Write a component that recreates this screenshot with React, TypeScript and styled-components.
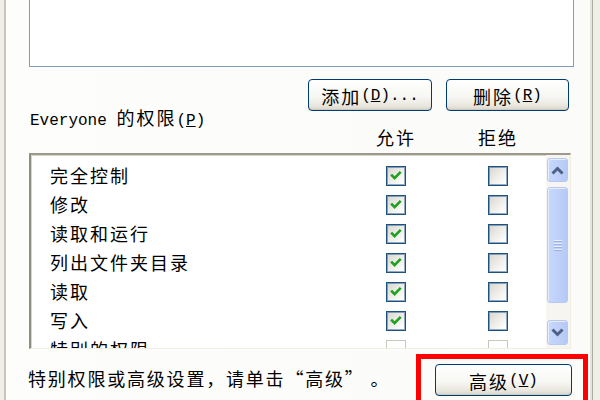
import React from 'react';
import styled, { createGlobalStyle, css } from 'styled-components';

const GlobalStyle = createGlobalStyle`
  html, body {
    margin: 0;
    padding: 0;
    width: 600px;
    height: 400px;
    overflow: hidden;
    background: #efeee8;
  }
`;

type Perm = { name: string; allow: boolean; disabled?: boolean };

const perms: Perm[] = [
  { name: '完全控制', allow: true },
  { name: '修改', allow: true },
  { name: '读取和运行', allow: true },
  { name: '列出文件夹目录', allow: true },
  { name: '读取', allow: true },
  { name: '写入', allow: true },
  { name: '特别的权限', allow: false, disabled: true },
];

const App = () => {
  return (
    <Page>
      <GlobalStyle />
      <Panel>
        <UserList />
        <ButtonRow>
          <XPButton $width={124}>
            添加<Latin>(<u>D</u>)...</Latin>
          </XPButton>
          <XPButton $width={123}>
            删除<Latin>(<u>R</u>)</Latin>
          </XPButton>
        </ButtonRow>
        <PermLabel>
          <Latin>Everyone </Latin>的权限<Latin>(<u>P</u>)</Latin>
        </PermLabel>
        <HeaderRow>
          <span />
          <HeaderCell>允许</HeaderCell>
          <HeaderCell>拒绝</HeaderCell>
        </HeaderRow>
        <PermList>
          <Rows>
            {perms.map((p) => (
              <Row key={p.name}>
                <RowName>{p.name}</RowName>
                <CheckCell>
                  <CheckBox checked={p.allow} disabled={p.disabled} />
                </CheckCell>
                <CheckCell>
                  <CheckBox checked={false} disabled={p.disabled} />
                </CheckCell>
              </Row>
            ))}
          </Rows>
          <ScrollBar>
            <ScrollButton>
              <Chevron up />
            </ScrollButton>
            <Thumb>
              <Grip>
                <i />
                <i />
                <i />
                <i />
              </Grip>
            </Thumb>
            <Track />
            <ScrollButton>
              <Chevron />
            </ScrollButton>
          </ScrollBar>
        </PermList>
        <Footer>
          <Hint>特别权限或高级设置，请单击“高级” 。</Hint>
          <Highlight>
            <XPButton $width={137}>
              高级<Latin>(<u>V</u>)</Latin>
            </XPButton>
          </Highlight>
        </Footer>
      </Panel>
    </Page>
  );
};

const CheckBox = ({ checked, disabled }: { checked: boolean; disabled?: boolean }) => (
  <Box $disabled={disabled}>
    {checked && (
      <svg width="18" height="18" viewBox="0 0 18 18">
        <path
          d="M5 8.5 L7.6 11.2 L12.8 5.8"
          fill="none"
          stroke="#21a121"
          strokeWidth="2.6"
          strokeLinecap="square"
        />
      </svg>
    )}
  </Box>
);

const Chevron = ({ up }: { up?: boolean }) => (
  <svg width="13" height="9" viewBox="0 0 13 9">
    <path
      d={up ? 'M1.5 7.5 L6.5 2.5 L11.5 7.5' : 'M1.5 1.5 L6.5 6.5 L11.5 1.5'}
      fill="none"
      stroke="#4d6185"
      strokeWidth="3"
    />
  </svg>
);

const cjk = `"Noto Sans CJK SC", "Noto Sans", sans-serif`;

const Page = styled.div`
  width: 600px;
  height: 400px;
  overflow: hidden;
  font-family: ${cjk};
  font-size: 18px;
  letter-spacing: 2px;
  color: #000;
`;

const Panel = styled.div`
  margin-left: 4px;
  width: 586px;
  height: 420px;
  background: linear-gradient(90deg, #fdfdfc 0%, #fbfbf9 100%);
  border-left: 2px solid #c6c4b6;
  border-right: 1px solid #aeac9f;
  box-shadow: inset -2px 0 0 #e4e3dc;
  display: flex;
  flex-direction: column;
`;

const Latin = styled.span`
  font-family: 'Liberation Mono', monospace;
  font-size: 16px;
  letter-spacing: 0;
`;

const UserList = styled.div`
  margin-left: 23px;
  width: 543px;
  height: 66px;
  background: #fff;
  border: 1px solid #7f9db9;
  border-top: none;
`;

const ButtonRow = styled.div`
  margin-top: 12px;
  display: flex;
  justify-content: flex-end;
  gap: 14px;
  padding-right: 23px;
`;

const XPButton = styled.div<{ $width: number }>`
  width: ${(p) => p.$width}px;
  height: 32px;
  box-sizing: border-box;
  border: 1px solid #003c74;
  border-radius: 4px;
  background: linear-gradient(180deg, #ffffff 0%, #f7f7f3 55%, #e9e7df 85%, #d8d4c8 100%);
  box-shadow: inset 0 -1px 0 #cdc9bd, inset 0 1px 0 #fff;
  display: flex;
  align-items: center;
  justify-content: center;
  line-height: 1;
  padding-top: 1px;
`;

const PermLabel = styled.div`
  margin-top: -3px;
  padding-left: 24px;
  height: 19px;
  line-height: 19px;
`;

const columns = css`
  display: grid;
  grid-template-columns: 295px 102px 1fr;
`;

const HeaderRow = styled.div`
  ${columns};
  padding-left: 44px;
  height: 20px;
  line-height: 20px;
`;

const HeaderCell = styled.div`
  padding-left: 31px;
`;

const PermList = styled.div`
  margin-top: 6px;
  margin-left: 23px;
  width: 542px;
  height: 196px;
  box-sizing: border-box;
  border-top: 2px solid #9d9a8c;
  border-left: 2px solid #8f8d82;
  border-right: 1px solid #f1efe2;
  border-bottom: 1px solid #f1efe2;
  box-shadow: inset 1px 1px 0 #d8d6cb;
  background: #fff;
  display: flex;
  overflow: hidden;
`;

const Rows = styled.div`
  flex: 1;
  padding-top: 6px;
  overflow: hidden;
`;

const Row = styled.div`
  ${columns};
  padding-left: 19px;
  height: 29px;
  align-items: center;
`;

const RowName = styled.div`
  line-height: 29px;
  white-space: nowrap;
`;

const CheckCell = styled.div`
  padding-left: 41px;
  display: flex;
  align-items: center;
`;

const Box = styled.div<{ $disabled?: boolean }>`
  width: 20px;
  height: 20px;
  box-sizing: border-box;
  border: 1px solid ${(p) => (p.$disabled ? '#c9c7ba' : '#1c5180')};
  box-shadow: ${(p) => (p.$disabled ? 'none' : 'inset 0 0 0 1px rgba(40, 90, 140, 0.5)')};
  background: ${(p) =>
    p.$disabled ? '#fff' : 'linear-gradient(135deg, #d6d5cf 0%, #ecebe6 45%, #ffffff 90%)'};
  display: flex;
  align-items: center;
  justify-content: center;
`;

const ScrollBar = styled.div`
  width: 24px;
  box-sizing: border-box;
  padding: 3px 2px 3px 1px;
  background: #f6f5f1;
  display: flex;
  flex-direction: column;
`;

const scrollPart = css`
  box-sizing: border-box;
  border: 1px solid #b7c9f0;
  border-radius: 3px;
  background: linear-gradient(90deg, #c8d7fb 0%, #bfd1fa 50%, #b6c9f5 100%);
  box-shadow: inset 1px 1px 0 #e6eefe;
`;

const ScrollButton = styled.div`
  ${scrollPart};
  height: 24px;
  flex: none;
  display: flex;
  align-items: center;
  justify-content: center;
  &:last-child {
    height: 25px;
  }
`;

const Thumb = styled.div`
  ${scrollPart};
  margin-top: 5px;
  height: 116px;
  flex: none;
  display: flex;
  align-items: center;
  justify-content: center;
`;

const Grip = styled.div`
  display: flex;
  flex-direction: column;
  gap: 2px;
  i {
    display: block;
    width: 8px;
    height: 1px;
    background: #e8eefc;
    box-shadow: 0 1px 0 #9bb1e0;
  }
`;

const Track = styled.div`
  flex: 1;
`;

const Footer = styled.div`
  display: flex;
  justify-content: space-between;
  align-items: flex-start;
  padding-left: 22px;
  padding-right: 4px;
  margin-top: 5px;
`;

const Hint = styled.div`
  margin-top: 14px;
  line-height: 20px;
  white-space: nowrap;
  letter-spacing: 1.8px;
`;

const Highlight = styled.div`
  border: 5px solid #ff0000;
  padding: 5px 11px 6px 14px;
`;

export default App;
